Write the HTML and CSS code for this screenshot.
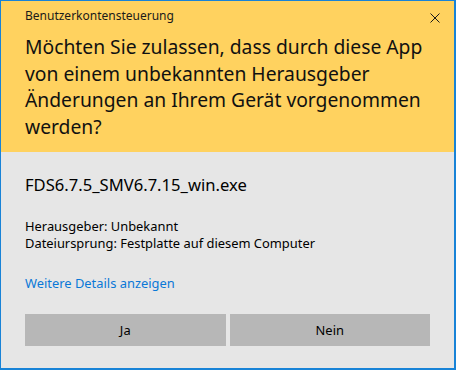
FILE: index.html
```html
<!DOCTYPE html>
<html lang="de">
<head>
  <meta charset="UTF-8">
  <title>Benutzerkontensteuerung</title>
  <link rel="stylesheet" href="styles.css">
</head>
<body>
  <div class="dialog">
    <!-- gelber Kopfbereich -->
    <div class="head">
      <div class="caption">
        <span>Benutzerkontensteuerung</span>
        <span class="close">
          <svg width="10" height="10" viewBox="0 0 10 10">
            <path d="M0.5 0.5 L9.5 9.5 M9.5 0.5 L0.5 9.5" stroke="#1a1a1a" stroke-width="1" fill="none"/>
          </svg>
        </span>
      </div>
      <h1>Möchten Sie zulassen, dass durch diese App<br>von einem unbekannten Herausgeber<br>Änderungen an Ihrem Gerät vorgenommen<br>werden?</h1>
    </div>

    <!-- grauer Inhaltsbereich -->
    <div class="body">
      <div class="file">FDS6.7.5_SMV6.7.15_win.exe</div>
      <div class="info">
        <div>Herausgeber: Unbekannt</div>
        <div>Dateiursprung: Festplatte auf diesem Computer</div>
      </div>
      <a class="details" href="#">Weitere Details anzeigen</a>
      <div class="buttons">
        <button>Ja</button>
        <button>Nein</button>
      </div>
    </div>
  </div>
</body>
</html>
```

FILE: styles.css
```css
html, body {
  margin: 0;
  padding: 0;
}
body {
  font-family: "Noto Sans", "Open Sans", sans-serif;
  color: #000;
}
.dialog {
  width: 456px;
  height: 370px;
  box-sizing: border-box;
  border-style: solid;
  border-color: #1883d7;
  border-width: 1px 2px 2px 1px;
  background: #e6e6e6;
  display: flex;
  flex-direction: column;
}
.head {
  background: #ffd25f;
  padding: 0 24px 11px 24px;
  height: 151px;
  box-sizing: border-box;
}
.caption {
  display: flex;
  justify-content: space-between;
  align-items: center;
  font-size: 12px;
  line-height: 16px;
  padding-top: 7px;
  color: #1a1a1a;
}
.close {
  display: flex;
  margin-right: -10px;
  margin-top: 3px;
}
.head h1 {
  font-weight: normal;
  font-size: 19.3px;
  line-height: 26.7px;
  margin: 10px 0 0 0;
  color: #111;
  white-space: nowrap;
}
.body {
  padding: 0 24px;
  flex: 1;
}
.file {
  font-size: 16.6px;
  line-height: 20px;
  margin-top: 23px;
}
.info {
  font-size: 12.9px;
  line-height: 17px;
  margin-top: 23px;
}
.details {
  display: block;
  color: #0a78d7;
  text-decoration: none;
  font-size: 12.9px;
  line-height: 17px;
  margin-top: 23px;
}
.buttons {
  display: flex;
  gap: 4px;
  margin-top: 22px;
}
.buttons button {
  flex: 1;
  height: 32px;
  border: 0;
  background: #b7b7b7;
  font-family: inherit;
  font-size: 12.9px;
  color: #000;
  padding: 0;
}
```
